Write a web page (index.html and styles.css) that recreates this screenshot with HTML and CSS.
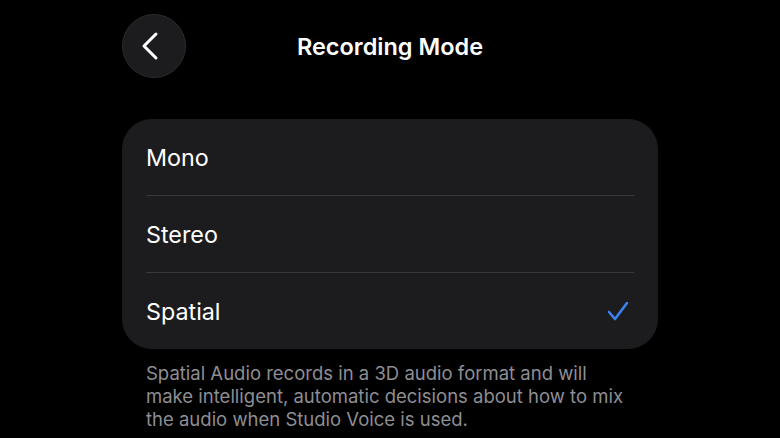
FILE: index.html
```html
<!DOCTYPE html>
<html lang="en">
<head>
<meta charset="UTF-8">
<title>Recording Mode</title>
<link rel="stylesheet" href="styles.css">
</head>
<body>
<div class="screen">
    <div class="header">
        <button class="back-btn" aria-label="Back">
            <svg width="32" height="32" viewBox="0 0 32 32"><path d="M21 4 L9 16 L21 28" fill="none" stroke="#fff" stroke-width="3" stroke-linecap="round" stroke-linejoin="round"/></svg>
        </button>
        <h1 class="title">Recording Mode</h1>
    </div>

    <div class="card">
        <div class="row">Mono</div>
        <div class="row">Stereo</div>
        <div class="row selected">
            <span>Spatial</span>
            <svg class="check" width="24" height="24" viewBox="0 0 24 24"><path d="M3 13 L9 20 L21 4" fill="none" stroke="#3b82f0" stroke-width="2.6" stroke-linecap="round" stroke-linejoin="round"/></svg>
        </div>
    </div>

    <p class="note">Spatial Audio records in a 3D audio format and will make intelligent, automatic decisions about how to mix the audio when Studio Voice is used.</p>
</div>
</body>
</html>
```

FILE: styles.css
```css
body {
    margin: 0;
    background: #000;
    font-family: Inter, "Noto Sans", sans-serif;
    color: #fff;
}
.screen {
    width: 536px;
    margin: 0 auto;
}
.header {
    display: flex;
    align-items: center;
    height: 64px;
    padding-top: 14px;
}
.back-btn {
    width: 64px;
    height: 64px;
    border-radius: 50%;
    background: #1c1c1e;
    border: 1px solid #2c2c2e;
    display: flex;
    align-items: center;
    justify-content: center;
    padding: 0 6px 0 0;
    margin: 0;
}
.title {
    flex: 1;
    margin: 0 64px 0 0;
    text-align: center;
    font-size: 23.5px;
    font-weight: 600;
}
.card {
    margin-top: 41px;
    background: #1c1c1e;
    border-radius: 30px;
    padding: 0 24px;
}
.row {
    height: 76px;
    display: flex;
    align-items: center;
    justify-content: space-between;
    font-size: 23.3px;
    border-bottom: 1px solid #38383a;
}
.row:last-child {
    border-bottom: none;
}
.check {
    margin-right: 4px;
}
.note {
    margin: 13px 24px 0;
    font-size: 18.5px;
    line-height: 23px;
    color: #8e8e93;
}
```
